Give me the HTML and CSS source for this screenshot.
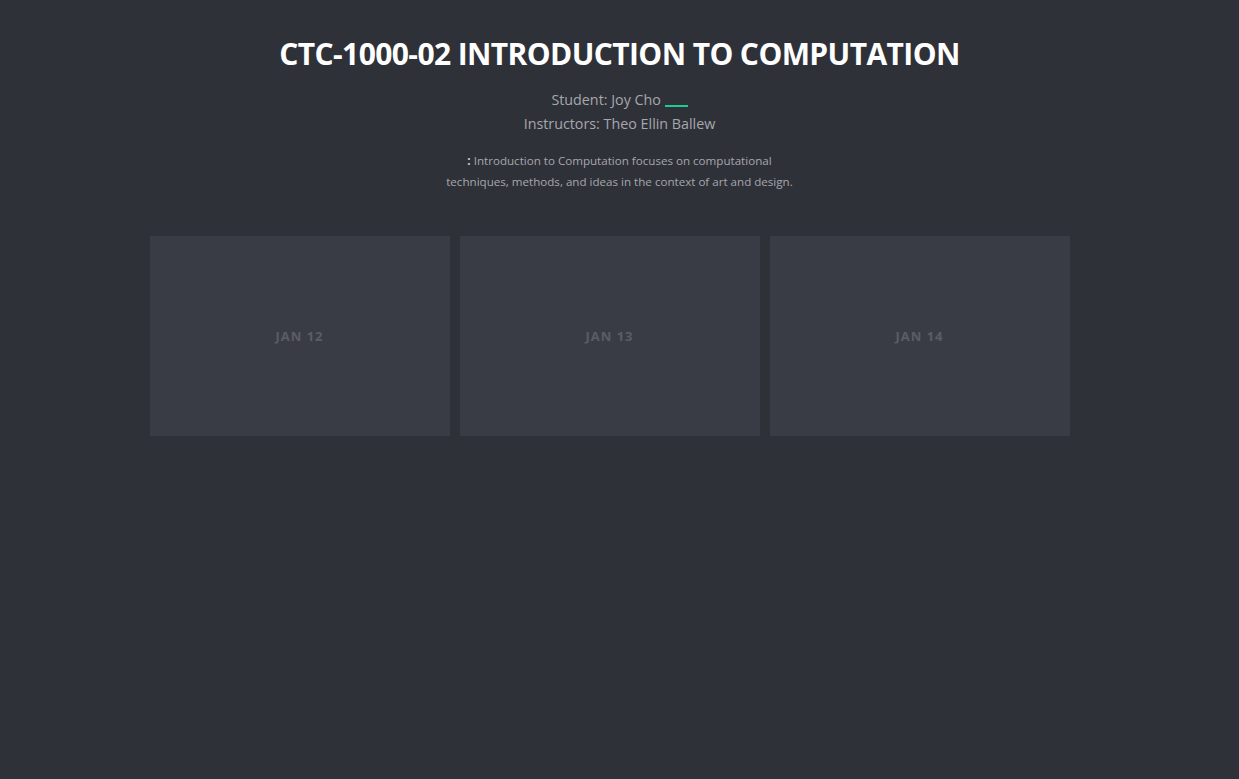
FILE: index.html
```html
<!DOCTYPE html>
<html>
<head>
<meta charset="utf-8">
<link rel="stylesheet" href="styles.css">
</head>
<body>
<header class="intro">
  <h1 class="title">CTC-1000-02 INTRODUCTION TO COMPUTATION</h1>
  <p class="meta">Student: Joy Cho <span class="link">&nbsp;&nbsp;&nbsp;&nbsp;&nbsp;&nbsp;</span></p>
  <p class="meta">Instructors: Theo Ellin Ballew</p>
  <p class="desc"><strong>:</strong> Introduction to Computation focuses on computational<br>techniques, methods, and ideas in the context of art and design.</p>
</header>
<main class="days">
  <div class="day"><span class="day-label">JAN 12</span></div>
  <div class="day"><span class="day-label">JAN 13</span></div>
  <div class="day"><span class="day-label">JAN 14</span></div>
</main>
</body>
</html>
```

FILE: styles.css
```css
html, body {
  margin: 0;
  padding: 0;
  background: #2f3139;
  min-height: 100%;
}
body {
  font-family: "Open Sans", "Liberation Sans", sans-serif;
  color: #a3a4a9;
}
.intro {
  text-align: center;
  padding-top: 34px;
}
.title {
  margin: 0;
  color: #ffffff;
  font-size: 30px;
  font-weight: 700;
  line-height: 40px;
  letter-spacing: -0.6px;
}
.meta {
  margin: 0;
  font-size: 14.3px;
  line-height: 24px;
  color: #a6a7ac;
}
.intro .meta:first-of-type {
  margin-top: 14px;
}
.link {
  display: inline-block;
  width: 23px;
  height: 17px;
  vertical-align: baseline;
  border-bottom: 2px solid #1fcc8f;
}
.desc {
  margin: 14px 0 0;
  font-size: 11.6px;
  line-height: 21px;
  color: #a6a7ac;
}
.desc strong {
  color: #d0d0d4;
}
.days {
  width: 940px;
  margin: 44px auto 0;
  display: flex;
  gap: 10px;
}
.day {
  width: 300px;
  height: 200px;
  background: #3a3c45;
  display: flex;
  align-items: center;
  justify-content: center;
}
.day-label {
  font-size: 13px;
  font-weight: 700;
  letter-spacing: 1px;
  color: #5a5c67;
}
```
